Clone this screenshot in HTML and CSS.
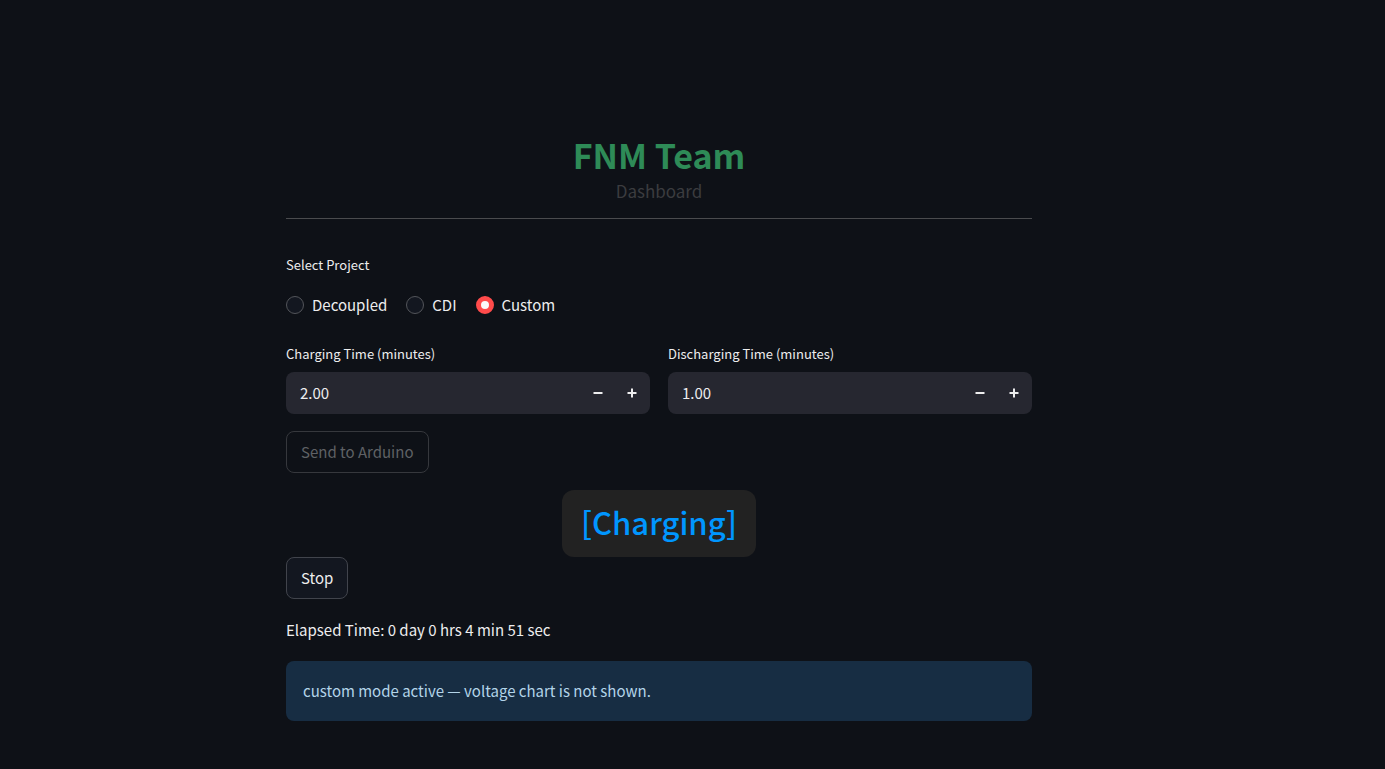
FILE: index.html
```html
<!DOCTYPE html>
<html lang="en">
<head>
<meta charset="utf-8">
<meta name="viewport" content="width=device-width, initial-scale=1">
<title>FNM Team Dashboard</title>
<link rel="stylesheet" href="styles.css">
</head>
<body>
<main class="page">
  <header class="header">
    <h1 class="title">FNM Team</h1>
    <p class="subtitle">Dashboard</p>
  </header>

  <fieldset class="projects">
    <legend class="label">Select Project</legend>
    <div class="options">
      <label class="option"><input class="radio" type="radio" name="project">Decoupled</label>
      <label class="option"><input class="radio" type="radio" name="project">CDI</label>
      <label class="option"><input class="radio" type="radio" name="project" checked>Custom</label>
    </div>
  </fieldset>

  <div class="times">
    <div class="field">
      <label class="label" for="charge">Charging Time (minutes)</label>
      <div class="number">
        <input class="value" id="charge" type="text" inputmode="decimal" value="2.00">
        <button class="step" type="button" aria-label="Decrease charging time"><svg class="icon" viewBox="0 0 10 10"><path d="M.5 5h9"/></svg></button>
        <button class="step" type="button" aria-label="Increase charging time"><svg class="icon" viewBox="0 0 10 10"><path d="M.5 5h9M5 .5v9"/></svg></button>
      </div>
    </div>
    <div class="field">
      <label class="label" for="discharge">Discharging Time (minutes)</label>
      <div class="number">
        <input class="value" id="discharge" type="text" inputmode="decimal" value="1.00">
        <button class="step" type="button" aria-label="Decrease discharging time"><svg class="icon" viewBox="0 0 10 10"><path d="M.5 5h9"/></svg></button>
        <button class="step" type="button" aria-label="Increase discharging time"><svg class="icon" viewBox="0 0 10 10"><path d="M.5 5h9M5 .5v9"/></svg></button>
      </div>
    </div>
  </div>

  <button class="button" type="button" disabled>Send to Arduino</button>
  <div class="status">[Charging]</div>
  <button class="button" type="button">Stop</button>
  <p class="elapsed">Elapsed Time: 0 day 0 hrs 4 min 51 sec</p>
  <p class="info">custom mode active — voltage chart is not shown.</p>
</main>
</body>
</html>
```
FILE: styles.css
```css
* {
  box-sizing: border-box;
}

body {
  margin: 0;
  padding: 131px 67px 48px 0;
  background: #0e1117;
  color: #ededee;
  font: 15px/24px "Noto Sans CJK SC", "Noto Sans", sans-serif;
}

.page {
  display: flex;
  flex-direction: column;
  align-items: flex-start;
  max-width: 746px;
  margin: 0 auto;
}

.header {
  align-self: stretch;
  padding-bottom: 15px;
  border-bottom: 1px solid #4a4b4e;
  text-align: center;
}

.title {
  margin: 0;
  color: #2e8b57;
  font-size: 34px;
  line-height: 48px;
  font-weight: 700;
}

.subtitle {
  margin: 0;
  color: #3b3c3f;
  font-size: 17px;
}

.projects {
  margin: 34px 0 0;
  padding: 0;
  border: 0;
}

.label {
  display: block;
  padding: 0;
  font-size: 13px;
  line-height: 24px;
}

.options {
  display: flex;
  gap: 19px;
  padding-top: 16px;
}

.option {
  display: flex;
  align-items: center;
  gap: 8px;
}

.radio {
  appearance: none;
  width: 18px;
  height: 18px;
  margin: 0;
  border: 1px solid #53555a;
  border-radius: 50%;
  background: #131720;
}

.radio:checked {
  border: 5px solid #ff4b4b;
  background: #fafafa;
}

.times {
  display: grid;
  grid-template-columns: 1fr 1fr;
  gap: 18px;
  align-self: stretch;
  margin-top: 25px;
}

.number {
  display: flex;
  height: 42px;
  margin-top: 6px;
  padding-right: 1px;
  border-radius: 8px;
  background: #262730;
  overflow: hidden;
}

.value {
  flex: 1;
  min-width: 0;
  padding: 0 14px;
  border: 0;
  background: transparent;
  color: inherit;
  font: inherit;
}

.step {
  display: grid;
  place-items: center;
  width: 34px;
  padding: 0;
  border: 0;
  background: transparent;
  color: #ededee;
}

.icon {
  width: 10px;
  height: 10px;
  fill: none;
  stroke: currentColor;
  stroke-width: 2;
}

.button {
  height: 42px;
  padding: 0 14px;
  border: 1px solid #41444c;
  border-radius: 8px;
  background: #131720;
  color: inherit;
  font: inherit;
}

.button:disabled {
  margin-top: 17px;
  border-color: #36383d;
  background: transparent;
  color: #5f6165;
}

.status {
  align-self: center;
  margin-top: 17px;
  padding: 8px 19px 11px;
  border-radius: 12px;
  background: #222;
  color: #0096ff;
  font-size: 31px;
  line-height: 48px;
  font-weight: 500;
}

.elapsed {
  margin: 19px 0;
}

.info {
  align-self: stretch;
  margin: 0;
  padding: 18px 17px;
  border-radius: 8px;
  background: #172d43;
  color: #b3d4e9;
}
```
